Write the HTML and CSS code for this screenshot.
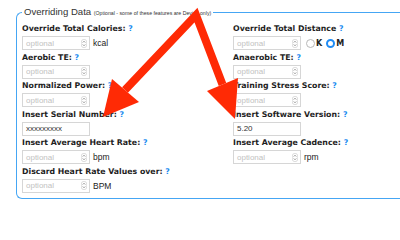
FILE: index.html
```html
<!DOCTYPE html>
<html>
<head>
<meta charset="utf-8">
<link rel="stylesheet" href="styles.css">
</head>
<body>
<div class="page">
  <fieldset class="box">
    <legend class="legend">Overriding Data <span class="note">(Optional - some of these features are Device only)</span></legend>
    <div class="grid">
      <div class="field">
        <div class="label">Override Total Calories: <span class="q">?</span></div>
        <div class="ctl"><div class="num"><span class="ph">optional</span><svg class="spin" viewBox="0 0 6 9"><rect x="0.3" y="0.3" width="5.4" height="8.4" rx="2.7" fill="#fff" stroke="#c8c8c8" stroke-width="0.6"/><path d="M1.7 3.6 L3 2.2 L4.3 3.6 M1.7 5.4 L3 6.8 L4.3 5.4" fill="none" stroke="#777" stroke-width="0.7"/></svg></div><span class="unit">kcal</span></div>
      </div>
      <div class="field">
        <div class="label">Override Total Distance <span class="q">?</span></div>
        <div class="ctl"><div class="num"><span class="ph">optional</span><svg class="spin" viewBox="0 0 6 9"><rect x="0.3" y="0.3" width="5.4" height="8.4" rx="2.7" fill="#fff" stroke="#c8c8c8" stroke-width="0.6"/><path d="M1.7 3.6 L3 2.2 L4.3 3.6 M1.7 5.4 L3 6.8 L4.3 5.4" fill="none" stroke="#777" stroke-width="0.7"/></svg></div>
          <span class="radio"></span><span class="rlabel">K</span><span class="radio on"></span><span class="rlabel">M</span>
        </div>
      </div>
      <div class="field">
        <div class="label">Aerobic TE: <span class="q">?</span></div>
        <div class="ctl"><div class="num"><span class="ph">optional</span><svg class="spin" viewBox="0 0 6 9"><rect x="0.3" y="0.3" width="5.4" height="8.4" rx="2.7" fill="#fff" stroke="#c8c8c8" stroke-width="0.6"/><path d="M1.7 3.6 L3 2.2 L4.3 3.6 M1.7 5.4 L3 6.8 L4.3 5.4" fill="none" stroke="#777" stroke-width="0.7"/></svg></div></div>
      </div>
      <div class="field">
        <div class="label">Anaerobic TE: <span class="q">?</span></div>
        <div class="ctl"><div class="num"><span class="ph">optional</span><svg class="spin" viewBox="0 0 6 9"><rect x="0.3" y="0.3" width="5.4" height="8.4" rx="2.7" fill="#fff" stroke="#c8c8c8" stroke-width="0.6"/><path d="M1.7 3.6 L3 2.2 L4.3 3.6 M1.7 5.4 L3 6.8 L4.3 5.4" fill="none" stroke="#777" stroke-width="0.7"/></svg></div></div>
      </div>
      <div class="field">
        <div class="label">Normalized Power: <span class="q">?</span></div>
        <div class="ctl"><div class="num"><span class="ph">optional</span><svg class="spin" viewBox="0 0 6 9"><rect x="0.3" y="0.3" width="5.4" height="8.4" rx="2.7" fill="#fff" stroke="#c8c8c8" stroke-width="0.6"/><path d="M1.7 3.6 L3 2.2 L4.3 3.6 M1.7 5.4 L3 6.8 L4.3 5.4" fill="none" stroke="#777" stroke-width="0.7"/></svg></div></div>
      </div>
      <div class="field">
        <div class="label">Training Stress Score: <span class="q">?</span></div>
        <div class="ctl"><div class="num"><span class="ph">optional</span><svg class="spin" viewBox="0 0 6 9"><rect x="0.3" y="0.3" width="5.4" height="8.4" rx="2.7" fill="#fff" stroke="#c8c8c8" stroke-width="0.6"/><path d="M1.7 3.6 L3 2.2 L4.3 3.6 M1.7 5.4 L3 6.8 L4.3 5.4" fill="none" stroke="#777" stroke-width="0.7"/></svg></div></div>
      </div>
      <div class="field">
        <div class="label">Insert Serial Number: <span class="q">?</span></div>
        <div class="ctl"><div class="txt">xxxxxxxxx</div></div>
      </div>
      <div class="field">
        <div class="label">Insert Software Version: <span class="q">?</span></div>
        <div class="ctl"><div class="txt">5.20</div></div>
      </div>
      <div class="field">
        <div class="label">Insert Average Heart Rate: <span class="q">?</span></div>
        <div class="ctl"><div class="num"><span class="ph">optional</span><svg class="spin" viewBox="0 0 6 9"><rect x="0.3" y="0.3" width="5.4" height="8.4" rx="2.7" fill="#fff" stroke="#c8c8c8" stroke-width="0.6"/><path d="M1.7 3.6 L3 2.2 L4.3 3.6 M1.7 5.4 L3 6.8 L4.3 5.4" fill="none" stroke="#777" stroke-width="0.7"/></svg></div><span class="unit">bpm</span></div>
      </div>
      <div class="field">
        <div class="label">Insert Average Cadence: <span class="q">?</span></div>
        <div class="ctl"><div class="num"><span class="ph">optional</span><svg class="spin" viewBox="0 0 6 9"><rect x="0.3" y="0.3" width="5.4" height="8.4" rx="2.7" fill="#fff" stroke="#c8c8c8" stroke-width="0.6"/><path d="M1.7 3.6 L3 2.2 L4.3 3.6 M1.7 5.4 L3 6.8 L4.3 5.4" fill="none" stroke="#777" stroke-width="0.7"/></svg></div><span class="unit">rpm</span></div>
      </div>
      <div class="field">
        <div class="label">Discard Heart Rate Values over: <span class="q">?</span></div>
        <div class="ctl"><div class="num"><span class="ph">optional</span><svg class="spin" viewBox="0 0 6 9"><rect x="0.3" y="0.3" width="5.4" height="8.4" rx="2.7" fill="#fff" stroke="#c8c8c8" stroke-width="0.6"/><path d="M1.7 3.6 L3 2.2 L4.3 3.6 M1.7 5.4 L3 6.8 L4.3 5.4" fill="none" stroke="#777" stroke-width="0.7"/></svg></div><span class="unit">BPM</span></div>
      </div>
    </div>
  </fieldset>
  <svg class="arrows" viewBox="0 0 400 206" width="400" height="206">
    <polyline points="125,84 196,9 222.5,78.5" fill="none" stroke="#ff2a05" stroke-width="8" stroke-linejoin="miter" stroke-miterlimit="10"/>
    <polygon points="112,73 139,96 103,111" fill="#ff2a05"/>
    <polygon points="207,85 238,72 235,113" fill="#ff2a05"/>
  </svg>
</div>
</body>
</html>
```
FILE: styles.css
```css
html, body {
  margin: 0;
  padding: 0;
  background: #fff;
}
body {
  width: 400px;
  height: 206px;
  overflow: hidden;
  font-family: "DejaVu Sans", Verdana, sans-serif;
  color: #222;
}
.page {
  position: relative;
  width: 400px;
  height: 206px;
}
.box {
  margin: 6px 0 0 16px;
  width: 384px;
  box-sizing: border-box;
  border: 1px solid #45a6f4;
  border-right: 0;
  border-radius: 6px 0 0 6px;
  padding: 3px 0 4px 5px;
  min-width: 0;
}
.legend {
  padding: 0 2px;
  font-family: "Liberation Sans", Arial, sans-serif;
  font-size: 9.6px;
  line-height: 12px;
  color: #333;
}
.note {
  font-size: 5.2px;
  color: #333;
}
.grid {
  display: grid;
  grid-template-columns: 211px 167px;
  grid-auto-rows: 28.6px;
}
.field {
  display: flex;
  flex-direction: column;
}
.label {
  font-weight: bold;
  font-size: 7.8px;
  line-height: 14px;
  height: 14px;
  white-space: nowrap;
  color: #1e1e1e;
}
.q {
  color: #1a8cf0;
}
.ctl {
  display: flex;
  align-items: center;
  height: 14px;
}
.num, .txt {
  box-sizing: border-box;
  width: 68px;
  height: 14px;
  border: 1px solid #d6d6d6;
  background: #fff;
  display: flex;
  align-items: center;
  justify-content: space-between;
  padding: 0 2px 0 3px;
  font-family: "Liberation Sans", Arial, sans-serif;
  font-size: 8px;
}
.txt {
  color: #333;
  font-size: 8px;
  justify-content: flex-start;
}
.ph {
  color: #c2c2c2;
}
.spin {
  width: 6px;
  height: 9px;
}
.unit {
  margin-left: 3px;
  font-family: "Liberation Sans", Arial, sans-serif;
  font-size: 8.5px;
  color: #222;
}
.radio {
  box-sizing: border-box;
  width: 9px;
  height: 9px;
  border-radius: 50%;
  border: 1px solid #b8b8b8;
  background: #fff;
  margin-left: 5px;
}
.radio.on {
  border: 2.6px solid #1f8cf5;
  margin-left: 4px;
}
.rlabel {
  font-weight: bold;
  font-size: 8px;
  margin-left: 1px;
  color: #222;
}
.arrows {
  position: absolute;
  left: 0;
  top: 0;
}
```
